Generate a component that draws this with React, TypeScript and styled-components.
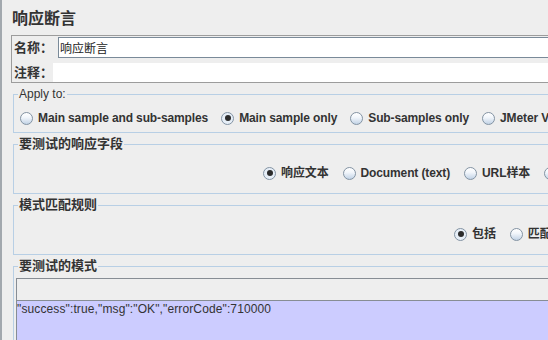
import React from 'react'
import styled, { createGlobalStyle } from 'styled-components'

const GlobalStyle = createGlobalStyle`
  html, body {
    margin: 0;
    padding: 0;
    background: #eeeeee;
  }
  body {
    font-family: "Liberation Sans", "Noto Sans CJK SC", sans-serif;
  }
`

const FONT = `"Liberation Sans", "Noto Sans CJK SC", sans-serif`

const Page = styled.div`
  width: 548px;
  height: 340px;
  overflow: hidden;
  box-sizing: border-box;
  background: #eeeeee;
  border-left: 2px solid #a2a8ae;
`

const Panel = styled.div`
  width: 820px;
  padding-left: 9px;
  display: flex;
  flex-direction: column;
`

const Title = styled.div`
  padding: 8px 0 0 1px;
  margin-bottom: 5px;
  font: 700 16px/22px ${FONT};
  color: #333;
`

const NameBox = styled.div`
  border: 1px solid #9c9c9c;
  padding: 1px 0 0 1px;
  display: flex;
  flex-direction: column;
  gap: 5px;
`

const FieldRow = styled.div<{ $h: number }>`
  display: flex;
  align-items: center;
  height: ${({ $h }) => $h}px;
`

const FieldLabel = styled.label<{ $w: number }>`
  flex: none;
  width: ${({ $w }) => $w}px;
  padding-left: 1px;
  box-sizing: border-box;
  font: 700 13px/16px ${FONT};
  color: #333;
`

const TextField = styled.input`
  flex: 1;
  height: 100%;
  box-sizing: border-box;
  margin: 0;
  border: 1px solid #7a8a99;
  border-right: none;
  padding: 0 0 0 1px;
  background: #fff;
  font: 400 12px ${FONT};
  color: #222;
  outline: none;
`

const PlainField = styled(TextField)`
  border: none;
  padding: 0;
`

const Groups = styled.div`
  display: flex;
  flex-direction: column;
  gap: 4px;
  margin: 4px 0 0 2px;
`

const Group = styled.fieldset<{ $pt: number; $pb: number }>`
  margin: 0;
  min-width: 0;
  padding: ${({ $pt }) => $pt}px 0 ${({ $pb }) => $pb}px 0;
  border: 1px solid #b8cfe5;
  border-right: none;
`

const Legend = styled.legend<{ $cjk?: boolean }>`
  margin-left: 4px;
  padding: 0 1px;
  font: ${({ $cjk }) => ($cjk ? '700 13px/14px' : '400 12px/14px')} ${FONT};
  color: #333;
`

const RadioRow = styled.div<{ $indent: number; $gap: number }>`
  display: flex;
  align-items: center;
  height: 20px;
  gap: ${({ $gap }) => $gap}px;
  padding-left: ${({ $indent }) => $indent}px;
`

const RadioItem = styled.label`
  display: flex;
  align-items: center;
  gap: 5px;
  white-space: nowrap;
  font: 700 12px/16px ${FONT};
  letter-spacing: -0.12px;
  color: #333;
`

const RadioDot = styled.span<{ $on?: boolean }>`
  position: relative;
  flex: none;
  width: 13px;
  height: 13px;
  box-sizing: border-box;
  border-radius: 50%;
  border: 1px solid #8393a3;
  background: ${({ $on }) =>
    $on ? '#e6eef7' : 'linear-gradient(#ffffff 0%, #f2f6fb 40%, #c2d3e6 100%)'};
  &::after {
    content: '';
    display: ${({ $on }) => ($on ? 'block' : 'none')};
    position: absolute;
    left: 2.5px;
    top: 2.5px;
    width: 6px;
    height: 6px;
    border-radius: 50%;
    background: #2b2b2b;
  }
`

const TableBox = styled.div`
  margin-left: 2px;
  border: 1px solid #878d94;
  border-right: none;
  border-bottom: none;
`

const TableHead = styled.div`
  height: 21px;
  background: #eeeeee;
  border-bottom: 1px solid #878d94;
`

const TableBody = styled.div`
  height: 60px;
  background: #ccccff;
`

const Cell = styled.div`
  font: 400 12px/17px ${FONT};
  letter-spacing: 0.12px;
  color: #333;
  white-space: nowrap;
`

type RadioOpt = { label: string; on?: boolean }

const Radios = ({ items, indent, gap }: { items: RadioOpt[]; indent: number; gap: number }) => (
  <RadioRow $indent={indent} $gap={gap}>
    {items.map((it) => (
      <RadioItem key={it.label}>
        <RadioDot $on={it.on} />
        {it.label}
      </RadioItem>
    ))}
  </RadioRow>
)

export default function App() {
  return (
    <Page>
      <GlobalStyle />
      <Panel>
        <Title>响应断言</Title>
        <NameBox>
          <FieldRow $h={21}>
            <FieldLabel $w={45}>名称：</FieldLabel>
            <TextField readOnly defaultValue="响应断言" />
          </FieldRow>
          <FieldRow $h={19}>
            <FieldLabel $w={40}>注释：</FieldLabel>
            <PlainField readOnly defaultValue="" />
          </FieldRow>
        </NameBox>
        <Groups>
          <Group $pt={7} $pb={4}>
            <Legend>Apply to:</Legend>
            <Radios
              indent={6}
              gap={13}
              items={[
                { label: 'Main sample and sub-samples' },
                { label: 'Main sample only', on: true },
                { label: 'Sub-samples only' },
                { label: 'JMeter Variable' },
              ]}
            />
          </Group>
          <Group $pt={12} $pb={10}>
            <Legend $cjk>要测试的响应字段</Legend>
            <Radios
              indent={249}
              gap={14}
              items={[
                { label: '响应文本', on: true },
                { label: 'Document (text)' },
                { label: 'URL样本' },
                { label: '响应代码' },
              ]}
            />
          </Group>
          <Group $pt={12} $pb={10}>
            <Legend $cjk>模式匹配规则</Legend>
            <Radios
              indent={440}
              gap={14}
              items={[
                { label: '包括', on: true },
                { label: '匹配' },
              ]}
            />
          </Group>
          <Group $pt={5} $pb={0}>
            <Legend $cjk>要测试的模式</Legend>
            <TableBox>
              <TableHead />
              <TableBody>
                <Cell>"success":true,"msg":"OK","errorCode":710000</Cell>
              </TableBody>
            </TableBox>
          </Group>
        </Groups>
      </Panel>
    </Page>
  )
}
